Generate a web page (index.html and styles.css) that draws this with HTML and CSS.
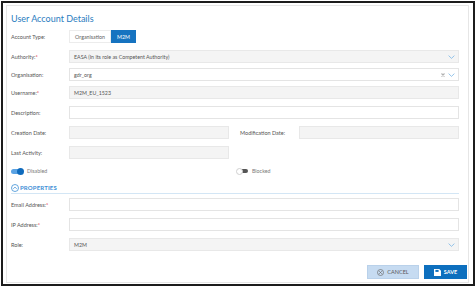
FILE: index.html
```html
<!DOCTYPE html>
<html lang="en">
<head>
<meta charset="utf-8">
<title>User Account Details</title>
<link rel="stylesheet" href="styles.css">
</head>
<body>
<div class="frame">
  <div class="card">
    <h1 class="title">User Account Details</h1>

    <div class="row row-account">
      <span class="label">Account Type:</span>
      <div class="seg">
        <span class="seg-btn">Organisation</span>
        <span class="seg-btn active">M2M</span>
      </div>
    </div>

    <div class="row">
      <span class="label">Authority:<span class="req">*</span></span>
      <div class="field ro">
        <span class="val">EASA (In its role as Competent Authority)</span>
        <svg class="chev" viewBox="0 0 7 4" width="7" height="4"><polyline points="0.6,0.6 3.5,3.4 6.4,0.6"/></svg>
      </div>
    </div>

    <div class="row tight">
      <span class="label">Organisation:</span>
      <div class="field">
        <span class="val">gdr_org</span>
        <svg class="clear" viewBox="0 0 4 4" width="4" height="4"><path d="M0.5 0.5 L3.5 3.5 M3.5 0.5 L0.5 3.5"/></svg>
        <svg class="chev" viewBox="0 0 7 4" width="7" height="4"><polyline points="0.6,0.6 3.5,3.4 6.4,0.6"/></svg>
      </div>
    </div>

    <div class="row tight">
      <span class="label">Username:<span class="req">*</span></span>
      <div class="field ro"><span class="val">M2M_EU_1523</span></div>
    </div>

    <div class="row">
      <span class="label">Description:</span>
      <div class="field"></div>
    </div>

    <div class="row row-split">
      <span class="label">Creation Date:</span>
      <div class="field ro"></div>
      <span class="label label-right">Modification Date:</span>
      <div class="field ro"></div>
    </div>

    <div class="row row-split">
      <span class="label">Last Activity:</span>
      <div class="field ro"></div>
    </div>

    <div class="toggles">
      <div class="toggle on">
        <span class="track"><span class="knob"></span></span>
        <span class="toggle-text">Disabled</span>
      </div>
      <div class="toggle off">
        <span class="track"><span class="knob"></span></span>
        <span class="toggle-text">Blocked</span>
      </div>
    </div>

    <div class="section">
      <svg class="section-icon" viewBox="0 0 8 8" width="8" height="8"><circle cx="4" cy="4" r="3.5"/><polyline points="2.3,4.8 4,3.1 5.7,4.8"/></svg>
      <span class="section-title">PROPERTIES</span>
    </div>

    <div class="row row-first">
      <span class="label">Email Address:<span class="req">*</span></span>
      <div class="field"></div>
    </div>

    <div class="row">
      <span class="label">IP Address:<span class="req">*</span></span>
      <div class="field"></div>
    </div>

    <div class="row">
      <span class="label">Role:</span>
      <div class="field ro">
        <span class="val">M2M</span>
        <svg class="chev" viewBox="0 0 7 4" width="7" height="4"><polyline points="0.6,0.6 3.5,3.4 6.4,0.6"/></svg>
      </div>
    </div>

    <div class="footer">
      <button class="btn btn-cancel" type="button">
        <svg class="btn-icon" viewBox="0 0 7 7" width="7" height="7"><circle cx="3.5" cy="3.5" r="3"/><path d="M2.2 2.2 L4.8 4.8 M4.8 2.2 L2.2 4.8"/></svg>
        <span>CANCEL</span>
      </button>
      <button class="btn btn-save" type="button">
        <svg class="btn-icon" viewBox="0 0 7 7" width="7" height="7"><path class="floppy" d="M0 0 H5.2 L7 1.8 V7 H0 Z"/><rect class="slot" x="1.4" y="0.9" width="3.2" height="2"/></svg>
        <span>SAVE</span>
      </button>
    </div>
  </div>
</div>
</body>
</html>
```

FILE: styles.css
```css
html, body {
  margin: 0;
  padding: 0;
  background: #ffffff;
}

body {
  font-family: Lato, "Open Sans", "Liberation Sans", sans-serif;
  color: #4a4a4a;
}

.frame {
  margin: 1px;
  width: 474px;
  height: 285px;
  box-sizing: border-box;
  border: 2px solid #1c1c1c;
  padding: 2px 4px 1px 3px;
  display: flex;
}

.card {
  flex: 1;
  box-sizing: border-box;
  border: 1px solid #e6e6e6;
  padding: 0 9px 0 4px;
  display: flex;
  flex-direction: column;
}

.title {
  margin: 7px 0 0;
  font-size: 9px;
  line-height: 12px;
  font-weight: 400;
  color: #2a7cc0;
}

.row {
  display: grid;
  grid-template-columns: 58px 1fr;
  align-items: center;
  height: 13px;
  margin-top: 7px;
}

.row.tight {
  margin-top: 5px;
}

.row-account {
  margin-top: 5px;
}

.row-first {
  margin-top: 4px;
}

.row-split {
  grid-template-columns: 58px 160px 11px 59px 160px;
}

.row-split .label-right {
  grid-column: 4;
}

.label {
  font-size: 5.5px;
  color: #555555;
  white-space: nowrap;
}

.req {
  color: #e0182d;
}

.seg {
  display: flex;
  height: 13px;
}

.seg-btn {
  display: flex;
  align-items: center;
  justify-content: center;
  box-sizing: border-box;
  font-size: 5.3px;
  color: #606060;
  background: #ffffff;
  border: 1px solid #ececec;
  width: 42px;
}

.seg-btn.active {
  width: 25px;
  background: #1673c0;
  border-color: #1673c0;
  color: #ffffff;
}

.field {
  height: 13px;
  box-sizing: border-box;
  border: 1px solid #e4e4e4;
  background: #ffffff;
  display: flex;
  align-items: center;
  padding: 0 3px 0 4px;
  font-size: 5.3px;
  color: #555555;
}

.field.ro {
  background: #f4f4f4;
  border-color: #e8e8e8;
}

.val {
  white-space: nowrap;
}

.chev {
  margin-left: auto;
  fill: none;
  stroke: #7ab6e6;
  stroke-width: 0.8;
}

.clear {
  margin-left: auto;
  margin-right: 3px;
  fill: none;
  stroke: #b0b0b0;
  stroke-width: 1.1;
}

.clear + .chev {
  margin-left: 0;
}

.toggles {
  display: grid;
  grid-template-columns: 225px 1fr;
  height: 8px;
  margin-top: 8px;
  align-items: center;
}

.toggle {
  display: flex;
  align-items: center;
}

.track {
  position: relative;
  width: 13px;
  height: 7px;
  display: block;
}

.toggle.on .track::before {
  content: "";
  position: absolute;
  left: 0;
  top: 1px;
  width: 11px;
  height: 5px;
  border-radius: 3px;
  background: #5aa2e3;
}

.toggle.on .knob {
  position: absolute;
  right: 0;
  top: 0;
  width: 7px;
  height: 7px;
  border-radius: 50%;
  background: #0f6bbd;
}

.toggle.off .track::before {
  content: "";
  position: absolute;
  left: 4px;
  top: 1.5px;
  width: 8px;
  height: 4px;
  border-radius: 2px;
  background: #555555;
}

.toggle.off .knob {
  position: absolute;
  left: 0;
  top: 0;
  width: 7px;
  height: 7px;
  box-sizing: border-box;
  border-radius: 50%;
  background: #ffffff;
  border: 0.6px solid #d0d0d0;
}

.toggle-text {
  margin-left: 3px;
  font-size: 5.3px;
  color: #7a7a7a;
}

.section {
  display: flex;
  align-items: center;
  height: 12px;
  box-sizing: border-box;
  margin-top: 7px;
  border-bottom: 1px solid #d3e6f5;
}

.section-icon {
  fill: none;
  stroke: #3d8fd6;
  stroke-width: 0.8;
  margin-right: 1px;
}

.section-title {
  font-size: 6px;
  font-weight: 700;
  color: #3d8fd6;
  letter-spacing: 0.15px;
}

.footer {
  display: flex;
  justify-content: flex-end;
  gap: 5px;
  margin-top: 14px;
  margin-right: -8px;
}

.btn {
  height: 14px;
  border: none;
  padding: 0;
  display: flex;
  align-items: center;
  justify-content: center;
  gap: 3px;
  font-family: inherit;
  font-size: 5.5px;
  cursor: pointer;
}

.btn-cancel {
  width: 52px;
  background: #c6dbf1;
  color: #5a5a5a;
  border: 1px solid #b9d1ea;
  box-sizing: border-box;
}

.btn-cancel .btn-icon {
  fill: none;
  stroke: #6a6a6a;
  stroke-width: 0.7;
}

.btn-save {
  width: 43px;
  background: #0d6fbe;
  color: #ffffff;
  font-weight: 700;
}

.btn-save .floppy {
  fill: #ffffff;
}

.btn-save .slot {
  fill: #0d6fbe;
}
```
